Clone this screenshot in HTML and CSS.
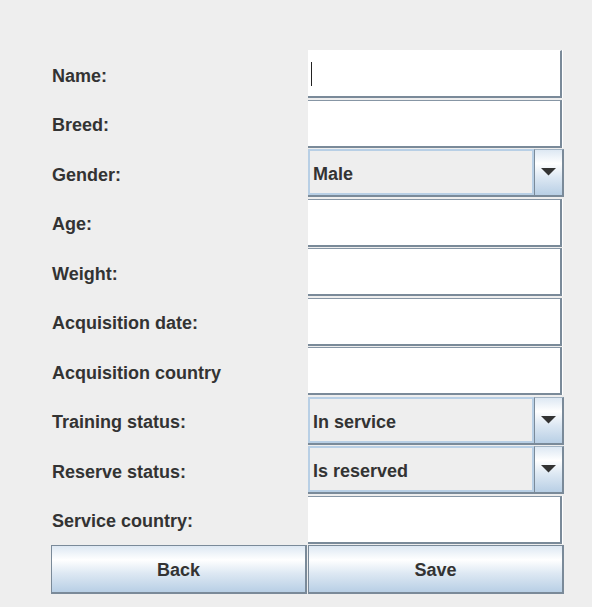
FILE: index.html
```html
<!DOCTYPE html>
<html>
<head>
<meta charset="utf-8">
<link rel="stylesheet" href="styles.css">
</head>
<body>
<div class="form">
  <div class="lbl">Name:</div>
  <div class="tf tf-first"><span class="caret"></span></div>
  <div class="lbl">Breed:</div>
  <div class="tf"></div>
  <div class="lbl">Gender:</div>
  <div class="combo"><div class="combo-value">Male</div><div class="combo-btn"><svg width="15" height="8" viewBox="0 0 15 8"><polygon points="0,0 15,0 7.5,7.5" fill="#333"/></svg></div></div>
  <div class="lbl">Age:</div>
  <div class="tf"></div>
  <div class="lbl">Weight:</div>
  <div class="tf"></div>
  <div class="lbl">Acquisition date:</div>
  <div class="tf"></div>
  <div class="lbl">Acquisition country</div>
  <div class="tf"></div>
  <div class="lbl">Training status:</div>
  <div class="combo"><div class="combo-value">In service</div><div class="combo-btn"><svg width="15" height="8" viewBox="0 0 15 8"><polygon points="0,0 15,0 7.5,7.5" fill="#333"/></svg></div></div>
  <div class="lbl">Reserve status:</div>
  <div class="combo"><div class="combo-value">Is reserved</div><div class="combo-btn"><svg width="15" height="8" viewBox="0 0 15 8"><polygon points="0,0 15,0 7.5,7.5" fill="#333"/></svg></div></div>
  <div class="lbl">Service country:</div>
  <div class="tf"></div>
  <button class="btn">Back</button>
  <button class="btn">Save</button>
</div>
</body>
</html>
```
FILE: styles.css
```css
html, body {
  margin: 0;
  background: #eeeeee;
  font-family: "Liberation Sans", Arial, sans-serif;
}
.form {
  display: grid;
  grid-template-columns: 256px 256px;
  column-gap: 1px;
  grid-auto-rows: 49.5px;
  padding: 50px 0 0 51px;
}
.lbl {
  display: flex;
  align-items: center;
  padding-left: 1px;
  padding-top: 3px;
  font-weight: bold;
  font-size: 18px;
  color: #333333;
}
.tf {
  position: relative;
  box-sizing: border-box;
  width: 254px;
  margin-bottom: 1.5px;
  background: #ffffff;
  border-top: 1px solid #8796a5;
  border-right: 2px solid #7a8a99;
  border-bottom: 2px solid #7a8a99;
  box-shadow: 1px 0 0 #ffffff;
}
.tf-first {
  border-top-color: #ffffff;
}
.caret {
  position: absolute;
  left: 3px;
  top: 11px;
  width: 1px;
  height: 24px;
  background: #222;
}
.combo {
  display: flex;
  box-sizing: border-box;
  width: 256px;
  height: 48px;
  border-bottom: 2px solid #7a8a99;
}
.combo-value {
  flex: 1;
  display: flex;
  align-items: center;
  padding-left: 3px;
  padding-top: 5px;
  border: 2px solid #b8cfe5;
  background: #eeeeee;
  font-weight: bold;
  font-size: 18px;
  color: #333333;
}
.combo-btn {
  width: 27px;
  display: flex;
  align-items: center;
  justify-content: center;
  border-top: 1px solid #a3b4c4;
  border-left: 1px solid #7a8a99;
  border-right: 2px solid #7a8a99;
  background: linear-gradient(#dde8f3 0%, #ffffff 30%, #dde8f3 60%, #b8cfe5 100%);
}
.combo-btn svg {
  display: block;
  margin-top: -1px;
}
.btn {
  box-sizing: border-box;
  height: 49px;
  margin: 0;
  padding: 3px 0 0;
  border: 1px solid #7a8a99;
  border-right-width: 2px;
  border-bottom-width: 2px;
  background: linear-gradient(#dde8f3 0%, #ffffff 30%, #dde8f3 60%, #b8cfe5 100%);
  font-family: "Liberation Sans", Arial, sans-serif;
  font-weight: bold;
  font-size: 18px;
  color: #333333;
}
```
